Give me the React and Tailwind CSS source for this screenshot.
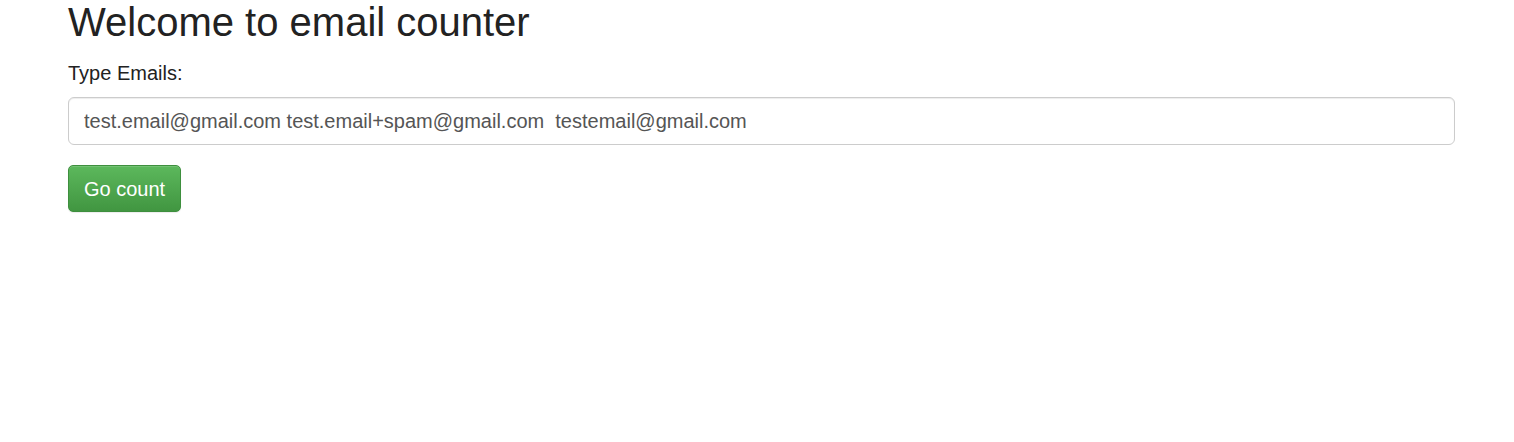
export default function App() {
  return (
    <div className="min-h-screen bg-white font-['Liberation_Sans',Arial,sans-serif]">
      <div className="ml-[68px] w-[1387px]">
        <h1 className="m-0 text-[40px] leading-[44px] font-normal text-[#222]">
          Welcome to email counter
        </h1>
        <form className="mt-4" onSubmit={(e) => e.preventDefault()}>
          <label htmlFor="emails" className="block text-[20px] leading-[27px] text-[#222]">
            Type Emails:
          </label>
          <input
            id="emails"
            type="text"
            defaultValue="test.email@gmail.com test.email+spam@gmail.com  testemail@gmail.com"
            className="mt-[10px] block h-[48px] w-full rounded-[6px] border border-[#ccc] bg-white px-[15px] text-[20px] text-[#555] shadow-[inset_0_1px_1px_rgba(0,0,0,0.075)] outline-none"
          />
          <button
            type="submit"
            className="mt-5 h-[47px] rounded-[5px] border border-[#3e8f3e] bg-gradient-to-b from-[#5cb85c] to-[#419641] px-[15px] text-[20px] text-white shadow-[inset_0_1px_0_rgba(255,255,255,0.15),0_1px_1px_rgba(0,0,0,0.075)]"
          >
            Go count
          </button>
        </form>
      </div>
    </div>
  )
}
